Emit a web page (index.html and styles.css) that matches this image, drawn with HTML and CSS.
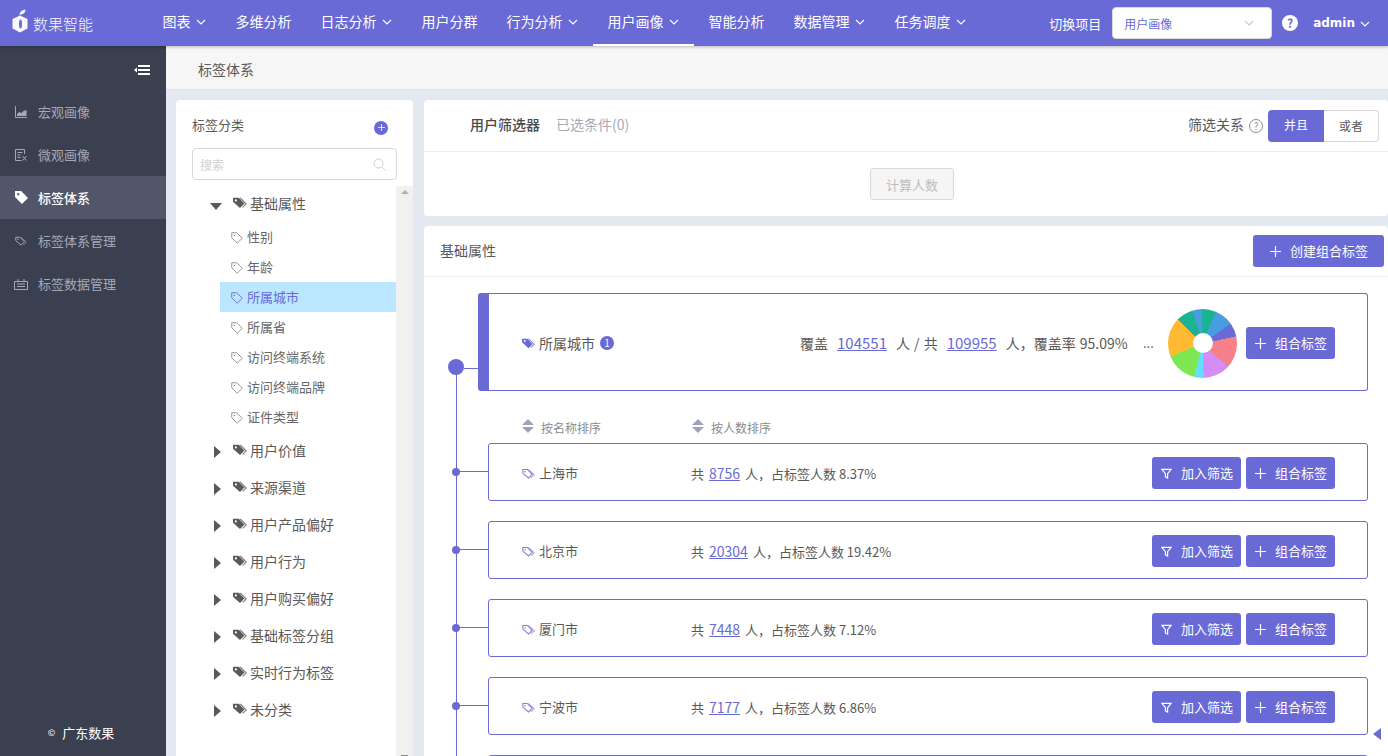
FILE: index.html
```html
<!DOCTYPE html>
<html lang="zh-CN">
<head>
    <meta charset="UTF-8">
    <title>标签体系</title>
    <link rel="stylesheet" href="styles.css">
</head>
<body>
    <svg class="defs" width="0" height="0">
        <symbol id="tag-line" viewBox="0 0 16 16">
            <path d="M1 1h6.700l7.300 7.300-6.700 6.700L1 7.700z" fill="none" stroke="currentColor" stroke-width="1.200"/>
            <circle cx="4.500" cy="4.500" r="1" fill="currentColor"/>
        </symbol>
        <symbol id="tag-double" viewBox="0 0 16 16">
            <path d="M1 3h5.500l6 6-4.500 4.500L1 7.500z" fill="none" stroke="currentColor" stroke-width="1.300"/>
            <path d="M8 3l7 6.500-4 4" fill="none" stroke="currentColor" stroke-width="1.300" opacity=".7"/>
            <circle cx="3.800" cy="5.800" r="1" fill="currentColor"/>
        </symbol>
        <symbol id="tag-fill" viewBox="0 0 16 16">
            <path d="M5 2h4l7 7-4.500 4.500-1-.8 3.500-3.700L7 2z" fill="currentColor" opacity=".75"/>
            <path d="M0 2h6.500l6.500 6.700-5 5L0 6.500z" fill="currentColor"/>
            <circle cx="3.300" cy="5" r="1.200" fill="#fff"/>
        </symbol>
        <symbol id="tag-solid" viewBox="0 0 16 16">
            <path d="M0 0h7.500L16 8.500 8.500 16 0 7.500z" fill="currentColor"/>
            <circle cx="4" cy="4" r="1.400" fill="#525669"/>
        </symbol>
        <symbol id="chevron" viewBox="0 0 10 6">
            <path d="M1 1l4 4 4-4" fill="none" stroke="currentColor" stroke-width="1.100"/>
        </symbol>
        <symbol id="plus" viewBox="0 0 11 11">
            <path d="M5.500 0v11M0 5.500h11" fill="none" stroke="currentColor" stroke-width="1.200"/>
        </symbol>
        <symbol id="funnel" viewBox="0 0 12 12">
            <path d="M1 1.500h10L7.200 6.200V11L4.800 9.800V6.200z" fill="none" stroke="currentColor" stroke-width="1.300"/>
        </symbol>
    </svg>

    <header class="topbar">
        <a class="logo">
            <svg width="17" height="25" viewBox="0 0 17 25">
                <path d="M8 6.500l7.500 3.500v9.500L8 23.500.5 19.500V10z" fill="#fff"/>
                <path d="M8.500 10.500c1 0 1.500 1.500 1.500 4.500s-.5 4.500-1.500 4.500S7 18 7 15s.5-4.500 1.500-4.500z" fill="#6a6ad6"/>
                <path d="M7.500 6C7.700 3 9.500 1 13.500.5c0 3-2 5-6 5.500z" fill="#fff"/>
            </svg>
            <span>数果智能</span>
        </a>
        <nav class="nav">
            <a class="nav-item">图表<svg class="nav-arrow"><use href="#chevron"/></svg></a>
            <a class="nav-item">多维分析</a>
            <a class="nav-item">日志分析<svg class="nav-arrow"><use href="#chevron"/></svg></a>
            <a class="nav-item">用户分群</a>
            <a class="nav-item">行为分析<svg class="nav-arrow"><use href="#chevron"/></svg></a>
            <a class="nav-item active">用户画像<svg class="nav-arrow"><use href="#chevron"/></svg></a>
            <a class="nav-item">智能分析</a>
            <a class="nav-item">数据管理<svg class="nav-arrow"><use href="#chevron"/></svg></a>
            <a class="nav-item">任务调度<svg class="nav-arrow"><use href="#chevron"/></svg></a>
        </nav>
        <div class="top-right">
            <span class="project-label">切换项目</span>
            <div class="project-select">
                <span>用户画像</span>
                <svg class="select-arrow"><use href="#chevron"/></svg>
            </div>
            <span class="help">?</span>
            <span class="user">admin</span>
            <svg class="nav-arrow user-arrow"><use href="#chevron"/></svg>
        </div>
    </header>

    <div class="layout">
        <aside class="sidebar">
            <div class="collapse">
                <svg width="16" height="10" viewBox="0 0 16 10">
                    <path d="M4 1h12M4 5h12M4 9h12" stroke="#fff" stroke-width="2"/>
                    <path d="M0 5l3-2.500v5z" fill="#fff"/>
                </svg>
            </div>
            <ul class="side-menu">
                <li>
                    <svg class="side-icon" viewBox="0 0 12 12"><path d="M.5 0v11.500H12" fill="none" stroke="currentColor"/><path d="M2 10V8l2.500-2 2 1 2-2 3-1v6z" fill="currentColor"/></svg>
                    宏观画像
                </li>
                <li>
                    <svg class="side-icon" viewBox="0 0 12 12"><path d="M9.500 5V.5h-9v11h6M2.500 3.500h5M2.500 6h3M2.500 8.500h3" fill="none" stroke="currentColor"/><path d="M7.500 7l4 4.500M11.500 7l-4 4.500" stroke="currentColor"/></svg>
                    微观画像
                </li>
                <li class="active">
                    <svg class="side-icon"><use href="#tag-solid"/></svg>
                    标签体系
                </li>
                <li>
                    <svg class="side-icon"><use href="#tag-double"/></svg>
                    标签体系管理
                </li>
                <li>
                    <svg class="side-icon side-icon-wide" viewBox="0 0 14 12"><path d="M.5 3.500h13v8H.5zM4 3.500V1M10 3.500V1" fill="none" stroke="currentColor"/><path d="M3 6h8M3 8.500h8" stroke="currentColor"/></svg>
                    标签数据管理
                </li>
            </ul>
            <div class="copyright">© <span>广东数果</span></div>
        </aside>

        <main class="content">
            <div class="crumb">标签体系</div>
            <div class="work">
                <section class="tree-panel">
                    <div class="tree-head">
                        <span>标签分类</span>
                        <span class="round-plus"><svg width="7" height="7"><use href="#plus"/></svg></span>
                    </div>
                    <div class="search">
                        <span>搜索</span>
                        <svg width="13" height="13" viewBox="0 0 13 13"><circle cx="5.500" cy="5.500" r="4.500" fill="none" stroke="currentColor"/><path d="M9 9l3.500 3.500" stroke="currentColor"/></svg>
                    </div>
                    <div class="tree-wrap">
                        <ul class="tree">
                            <li class="group"><i class="caret open"></i><svg class="group-icon"><use href="#tag-fill"/></svg>基础属性</li>
                            <li class="leaf"><svg class="leaf-icon"><use href="#tag-line"/></svg>性别</li>
                            <li class="leaf"><svg class="leaf-icon"><use href="#tag-line"/></svg>年龄</li>
                            <li class="leaf selected"><svg class="leaf-icon"><use href="#tag-line"/></svg>所属城市</li>
                            <li class="leaf"><svg class="leaf-icon"><use href="#tag-line"/></svg>所属省</li>
                            <li class="leaf"><svg class="leaf-icon"><use href="#tag-line"/></svg>访问终端系统</li>
                            <li class="leaf"><svg class="leaf-icon"><use href="#tag-line"/></svg>访问终端品牌</li>
                            <li class="leaf"><svg class="leaf-icon"><use href="#tag-line"/></svg>证件类型</li>
                            <li class="group"><i class="caret"></i><svg class="group-icon"><use href="#tag-fill"/></svg>用户价值</li>
                            <li class="group"><i class="caret"></i><svg class="group-icon"><use href="#tag-fill"/></svg>来源渠道</li>
                            <li class="group"><i class="caret"></i><svg class="group-icon"><use href="#tag-fill"/></svg>用户产品偏好</li>
                            <li class="group"><i class="caret"></i><svg class="group-icon"><use href="#tag-fill"/></svg>用户行为</li>
                            <li class="group"><i class="caret"></i><svg class="group-icon"><use href="#tag-fill"/></svg>用户购买偏好</li>
                            <li class="group"><i class="caret"></i><svg class="group-icon"><use href="#tag-fill"/></svg>基础标签分组</li>
                            <li class="group"><i class="caret"></i><svg class="group-icon"><use href="#tag-fill"/></svg>实时行为标签</li>
                            <li class="group"><i class="caret"></i><svg class="group-icon"><use href="#tag-fill"/></svg>未分类</li>
                        </ul>
                        <div class="scrollbar"><i class="scroll-up"></i><i class="scroll-down"></i></div>
                    </div>
                </section>

                <div class="right">
                    <section class="filter-panel">
                        <div class="filter-head">
                            <b>用户筛选器</b>
                            <span class="filter-count">已选条件(0)</span>
                            <span class="filter-rel">筛选关系</span>
                            <span class="help-line">?</span>
                            <div class="switch">
                                <span class="on">并且</span>
                                <span class="off">或者</span>
                            </div>
                        </div>
                        <div class="filter-foot">
                            <button class="calc" disabled>计算人数</button>
                        </div>
                    </section>

                    <section class="main-panel">
                        <div class="main-head">
                            <span class="main-title">基础属性</span>
                            <button class="btn btn-create"><svg width="11" height="11"><use href="#plus"/></svg>创建组合标签</button>
                        </div>
                        <div class="timeline">
                            <div class="card card-top">
                                <div class="name-top"><svg class="name-icon"><use href="#tag-fill"/></svg>所属城市<em class="badge">1</em></div>
                                <div class="stats-top">覆盖<a>104551</a>人 / 共<a>109955</a>人，覆盖率 95.09%</div>
                                <span class="more">...</span>
                                <div class="pie"></div>
                                <button class="btn"><svg width="11" height="11"><use href="#plus"/></svg>组合标签</button>
                            </div>

                            <div class="sort-row">
                                <span class="sort sort-name"><i class="sort-icon"></i>按名称排序</span>
                                <span class="sort"><i class="sort-icon"></i>按人数排序</span>
                            </div>

                            <div class="card">
                                <div class="name"><svg class="name-icon"><use href="#tag-double"/></svg>上海市</div>
                                <div class="stats">共<a>8756</a>人，占标签人数 8.37%</div>
                                <div class="actions">
                                    <button class="btn"><svg width="11" height="11"><use href="#funnel"/></svg>加入筛选</button>
                                    <button class="btn"><svg width="11" height="11"><use href="#plus"/></svg>组合标签</button>
                                </div>
                            </div>
                            <div class="card">
                                <div class="name"><svg class="name-icon"><use href="#tag-double"/></svg>北京市</div>
                                <div class="stats">共<a>20304</a>人，占标签人数 19.42%</div>
                                <div class="actions">
                                    <button class="btn"><svg width="11" height="11"><use href="#funnel"/></svg>加入筛选</button>
                                    <button class="btn"><svg width="11" height="11"><use href="#plus"/></svg>组合标签</button>
                                </div>
                            </div>
                            <div class="card">
                                <div class="name"><svg class="name-icon"><use href="#tag-double"/></svg>厦门市</div>
                                <div class="stats">共<a>7448</a>人，占标签人数 7.12%</div>
                                <div class="actions">
                                    <button class="btn"><svg width="11" height="11"><use href="#funnel"/></svg>加入筛选</button>
                                    <button class="btn"><svg width="11" height="11"><use href="#plus"/></svg>组合标签</button>
                                </div>
                            </div>
                            <div class="card">
                                <div class="name"><svg class="name-icon"><use href="#tag-double"/></svg>宁波市</div>
                                <div class="stats">共<a>7177</a>人，占标签人数 6.86%</div>
                                <div class="actions">
                                    <button class="btn"><svg width="11" height="11"><use href="#funnel"/></svg>加入筛选</button>
                                    <button class="btn"><svg width="11" height="11"><use href="#plus"/></svg>组合标签</button>
                                </div>
                            </div>
                            <div class="card"></div>
                            <i class="side-toggle"></i>
                        </div>
                    </section>
                </div>
            </div>
        </main>
    </div>
</body>
</html>
```

FILE: styles.css
```css
* {
    box-sizing: border-box;
}
html, body {
    height: 100%;
}
body {
    margin: 0;
    height: 100vh;
    overflow: hidden;
    display: flex;
    flex-direction: column;
    font-family: "Noto Sans CJK SC", "Noto Sans", sans-serif;
    font-size: 13px;
    color: #595959;
    background: #e4e8f0;
}
ul {
    list-style: none;
    margin: 0;
    padding: 0;
}
.defs {
    position: absolute;
}

/* top bar */
.topbar {
    height: 46px;
    flex: none;
    display: flex;
    align-items: center;
    background: #6a6ad6;
    color: #fff;
    box-shadow: 0 1px 3px rgba(0,0,0,0.25);
    position: relative;
    z-index: 2;
}
.logo {
    width: 148px;
    padding-left: 12px;
    display: flex;
    align-items: center;
    gap: 4px;
    font-size: 15px;
    font-weight: 300;
    opacity: 0.95;
}
.logo svg {
    margin-top: -3px;
}
.nav {
    display: flex;
    height: 46px;
}
.nav-item {
    display: flex;
    align-items: center;
    padding: 0 14.5px 4px;
    font-size: 14px;
    height: 46px;
}
.nav-item.active {
    padding-bottom: 2px;
    border-bottom: 2px solid #fff;
}
.nav-arrow {
    width: 10px;
    height: 6px;
    margin: 1px 1px 0 5px;
}
.top-right {
    margin-left: auto;
    display: flex;
    align-items: center;
    padding-right: 17px;
}
.project-label {
    margin-right: 11px;
}
.project-select {
    width: 160px;
    height: 32px;
    display: flex;
    align-items: center;
    justify-content: space-between;
    padding: 0 17px 0 11px;
    background: #fff;
    border: 1px solid #d9d9d9;
    border-radius: 4px;
    color: #6a6ad6;
    font-size: 12px;
}
.select-arrow {
    width: 10px;
    height: 6px;
    color: #c8c8c8;
}
.help {
    width: 16px;
    height: 16px;
    margin: 0 15px 0 10px;
    border-radius: 50%;
    background: #fff;
    color: #6a6ad6;
    font-size: 12px;
    font-weight: 700;
    line-height: 16px;
    text-align: center;
}
.user {
    font-family: "DejaVu Sans", sans-serif;
    font-size: 12px;
    font-weight: 700;
}
.user-arrow {
    margin-left: 5px;
}

/* page layout */
.layout {
    flex: 1;
    min-height: 0;
    display: flex;
}
.sidebar {
    width: 166px;
    flex: none;
    display: flex;
    flex-direction: column;
    background: #3b4050;
    color: #a4a8b6;
}
.collapse {
    height: 44px;
    display: flex;
    align-items: center;
    justify-content: flex-end;
    padding: 3px 16px 0 0;
}
.side-menu li {
    height: 43px;
    display: flex;
    align-items: center;
    gap: 11px;
    padding-left: 15px;
}
.side-menu li.active {
    background: #525669;
    color: #fff;
    font-weight: 500;
}
.side-menu li.active .side-icon {
    width: 13px;
    height: 13px;
    margin-right: -1px;
}
.side-icon {
    width: 12px;
    height: 12px;
    flex: none;
}
.side-icon-wide {
    width: 14px;
    margin-left: -1px;
    margin-right: -1px;
}
.copyright {
    margin-top: auto;
    height: 48px;
    padding-right: 4px;
    color: #fff;
    font-size: 9px;
    display: flex;
    align-items: center;
    justify-content: center;
    gap: 7px;
}
.copyright span {
    font-size: 13px;
}

.content {
    flex: 1;
    min-width: 0;
    display: flex;
    flex-direction: column;
}
.crumb {
    height: 44px;
    flex: none;
    padding-left: 32px;
    line-height: 47px;
    font-size: 14px;
    background: #f6f6f6;
    border-bottom: 1px solid #e3e3e3;
}
.work {
    flex: 1;
    min-height: 0;
    display: flex;
    gap: 11px;
    padding: 10px 0 0 10px;
}

/* tag tree */
.tree-panel {
    width: 237px;
    flex: none;
    display: flex;
    flex-direction: column;
    background: #fff;
    border-radius: 4px 4px 0 0;
}
.tree-head {
    height: 48px;
    flex: none;
    display: flex;
    align-items: center;
    justify-content: space-between;
    padding: 1px 25px 0 16px;
}
.round-plus {
    width: 14px;
    height: 14px;
    margin-top: 6px;
    display: flex;
    align-items: center;
    justify-content: center;
    border-radius: 50%;
    background: #6a6ad6;
    color: #fff;
}
.search {
    height: 32px;
    flex: none;
    margin-left: 16px;
    width: 205px;
    display: flex;
    align-items: center;
    justify-content: space-between;
    padding: 0 10px 0 7px;
    border: 1px solid #d9d9d9;
    border-radius: 4px;
    color: #d0d0d0;
    font-size: 12px;
}
.tree-wrap {
    flex: 1;
    min-height: 0;
    margin-top: 6px;
    display: flex;
}
.tree {
    flex: 1;
    min-width: 0;
    margin-top: -1px;
}
.group {
    height: 37px;
    display: flex;
    align-items: center;
    padding: 0 0 2px 38px;
    font-size: 14px;
    color: #595959;
}
.caret {
    width: 0;
    height: 0;
    margin: 4px 12px 0 0;
    border-style: solid;
    border-width: 6px 0 6px 7px;
    border-color: transparent transparent transparent #595959;
}
.caret.open {
    margin: 7px 11px 0 -4px;
    border-width: 7px 6px 0 6px;
    border-color: #595959 transparent transparent transparent;
}
.group-icon {
    width: 14px;
    height: 14px;
    margin: 1px 3px 0 0;
    flex: none;
}
.leaf {
    height: 30px;
    margin-left: 44px;
    padding: 0 0 2px 11px;
    display: flex;
    align-items: center;
    gap: 4px;
    color: #666;
}
.leaf.selected {
    background: #bae7ff;
    color: #6a6ad6;
}
.leaf-icon {
    width: 12px;
    height: 12px;
    margin-top: 4px;
    color: #8c8c8c;
}
.leaf.selected .leaf-icon {
    color: #6a6ad6;
}
.scrollbar {
    width: 17px;
    flex: none;
    background: #f1f1f1;
    display: flex;
    flex-direction: column;
    align-items: center;
    justify-content: space-between;
    padding: 4px 0 0;
}
.scroll-up {
    width: 0;
    height: 0;
    border-style: solid;
    border-width: 0 4px 4px 4px;
    border-color: transparent transparent #b0b0b0 transparent;
}
.scroll-down {
    width: 7px;
    height: 1px;
    background: #8c8c8c;
}

/* filter */
.right {
    flex: 1;
    min-width: 0;
    display: flex;
    flex-direction: column;
    gap: 10px;
}
.filter-panel {
    height: 116px;
    flex: none;
    background: #fff;
    border-radius: 4px;
}
.filter-head {
    height: 52px;
    display: flex;
    align-items: center;
    padding: 0 9px 0 46px;
    border-bottom: 1px solid #ebebeb;
    font-size: 14px;
}
.filter-head b {
    font-weight: 500;
    color: #4a4a4a;
    margin-top: -4px;
}
.filter-count {
    margin: -4px 0 0 16px;
    color: #a9a9b5;
}
.filter-rel {
    margin: -4px 0 0 auto;
}
.help-line {
    width: 14px;
    height: 14px;
    margin: 0 5px;
    border: 1px solid #8c8c8c;
    border-radius: 50%;
    color: #8c8c8c;
    font-size: 10px;
    line-height: 12px;
    text-align: center;
}
.switch {
    width: 111px;
    height: 32px;
    display: flex;
    font-size: 12px;
    line-height: 30px;
    text-align: center;
}
.switch .on {
    width: 56px;
    background: #6a6ad6;
    color: #fff;
    border-radius: 4px 0 0 4px;
}
.switch .off {
    flex: 1;
    border: 1px solid #d9d9d9;
    border-left: none;
    border-radius: 0 4px 4px 0;
}
.filter-foot {
    display: flex;
    justify-content: center;
    padding: 16px 0 0 12px;
}
.calc {
    width: 84px;
    height: 32px;
    font: inherit;
    font-size: 13px;
    color: #bdbdbd;
    background: #f5f5f5;
    border: 1px solid #d9d9d9;
    border-radius: 3px;
}

/* main list */
.main-panel {
    flex: 1;
    min-height: 0;
    overflow: hidden;
    background: #fff;
    border-radius: 4px 4px 0 0;
}
.main-head {
    height: 51px;
    display: flex;
    align-items: center;
    justify-content: space-between;
    padding: 0 4px 0 16px;
    border-bottom: 1px solid #ebebeb;
}
.main-title {
    font-size: 14px;
    margin-top: -2px;
}
.btn {
    width: 89px;
    height: 32px;
    flex: none;
    display: flex;
    align-items: center;
    gap: 9px;
    padding: 0 0 2px 9px;
    font: inherit;
    font-size: 13px;
    color: #fff;
    background: #6a6ad6;
    border: none;
    border-radius: 3px;
}
.btn svg {
    margin-top: 2px;
}
.btn-create {
    width: 131px;
    padding-left: 17px;
}
.timeline {
    position: relative;
    padding-top: 16px;
}
.timeline::before {
    content: "";
    position: absolute;
    left: 32px;
    top: 90px;
    bottom: 0;
    width: 1px;
    background: #6a6ad6;
}
.card {
    position: relative;
    height: 58px;
    margin: 0 20px 20px 64px;
    padding-left: 33px;
    display: flex;
    align-items: center;
    border: 1px solid #6a6ad6;
    border-radius: 3px;
}
.card::before {
    content: "";
    position: absolute;
    left: -37px;
    top: 24px;
    width: 8px;
    height: 8px;
    border-radius: 50%;
    background: #6a6ad6;
}
.card::after {
    content: "";
    position: absolute;
    left: -33px;
    top: 27px;
    width: 32px;
    height: 1px;
    background: #6a6ad6;
}
.card-top {
    height: 98px;
    margin: 0 20px 0 54px;
    border-left-width: 11px;
}
.card-top::before {
    left: -41px;
    top: 65px;
    width: 16px;
    height: 16px;
}
.card-top::after {
    left: -25px;
    top: 74px;
    width: 14px;
}
.name, .name-top {
    display: flex;
    align-items: center;
    flex: none;
    color: #595959;
}
.name {
    width: 169px;
}
.name-top {
    width: 278px;
    font-size: 14px;
    margin-top: 1px;
}
.name-icon {
    width: 13px;
    height: 13px;
    margin-right: 4px;
    margin-top: 2px;
    color: #8a7ad8;
}
.name-top .name-icon {
    color: #6a6ad6;
}
.badge {
    width: 14px;
    height: 14px;
    margin-left: 5px;
    border-radius: 50%;
    background: #6a6ad6;
    color: #fff;
    font-size: 10px;
    font-style: normal;
    line-height: 14px;
    text-align: center;
}
.stats {
    margin-top: 2px;
}
.stats a, .stats-top a {
    color: #6a6ad6;
    text-decoration: underline;
}
.stats a {
    margin: 0 5px;
    font-size: 14px;
}
.stats-top {
    flex: none;
    width: 343px;
    font-size: 14px;
    margin-top: 1px;
    word-spacing: 1px;
    white-space: nowrap;
}
.stats-top a {
    margin: 0 9px;
    font-size: 15px;
}
.more {
    flex: none;
    width: 25px;
    margin-top: 1px;
}
.pie {
    position: relative;
    width: 69px;
    height: 69px;
    flex: none;
    margin-top: 2px;
    border-radius: 50%;
    background: conic-gradient(#1ab394 0 23deg, #4a9ce0 23deg 55deg, #6a6ad6 55deg 78deg, #f5808a 78deg 133deg, #d68cf5 133deg 178deg, #66dcff 178deg 194deg, #7ee651 194deg 248deg, #ffb933 248deg 315deg, #1ab394 315deg 343deg, #4a9ce0 343deg 360deg);
}
.pie::after {
    content: "";
    position: absolute;
    left: 24.5px;
    top: 24.5px;
    width: 20px;
    height: 20px;
    border-radius: 50%;
    background: #fff;
}
.pie + .btn {
    margin: 2px 0 0 9px;
}
.actions {
    margin: 2px 32px 0 auto;
    display: flex;
    gap: 5px;
}
.sort-row {
    height: 52px;
    display: flex;
    align-items: center;
    padding: 20px 0 0 98px;
    font-size: 12px;
    color: #8c8c8c;
}
.sort {
    display: flex;
    align-items: center;
    gap: 7px;
}
.sort-name {
    width: 170px;
}
.sort-icon {
    position: relative;
    width: 12px;
    height: 14px;
    margin-top: -3px;
}
.sort-icon::before {
    content: "";
    position: absolute;
    left: 0;
    top: 0;
    border-style: solid;
    border-width: 0 6px 6px 6px;
    border-color: transparent transparent #9ea3b8 transparent;
}
.sort-icon::after {
    content: "";
    position: absolute;
    left: 0;
    bottom: 0;
    border-style: solid;
    border-width: 6px 6px 0 6px;
    border-color: #9ea3b8 transparent transparent transparent;
}
.side-toggle {
    position: absolute;
    right: 7px;
    top: 451px;
    width: 0;
    height: 0;
    border-style: solid;
    border-width: 6px 8px 6px 0;
    border-color: transparent #6a6ad6 transparent transparent;
}
```
